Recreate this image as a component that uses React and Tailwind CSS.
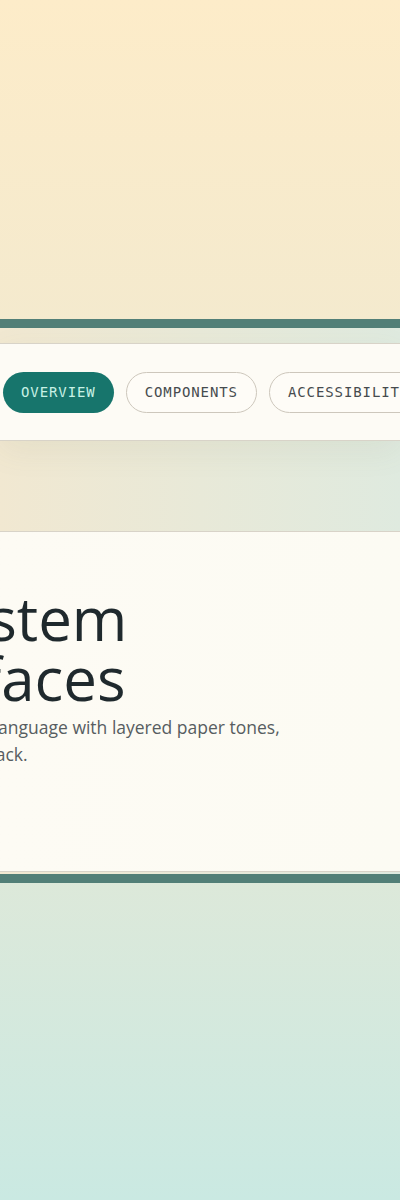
import React from 'react';

const tabs = ['Overview', 'Components', 'Accessibility', 'Tokens'];

const App = () => {
    const active = 'Overview';

    return (
        <div className="min-h-[1200px] overflow-hidden bg-gradient-to-b from-[#fdecc9] via-[#ece8d2] to-[#cae9e2] pt-[319px] font-['Open_Sans',sans-serif]">
            <section className="border-y-[9px] border-[#527f77] bg-gradient-to-r from-[#f1e8d1] to-[#dfeadf] pt-[15px] pb-[2px]">

                {/* Tabs */}
                <nav className="border-y border-[#d8d3c8] bg-[#fdfbf5] pt-[28px] pb-[27px] shadow-[0_10px_30px_rgba(120,110,80,0.08)]">
                    <div className="ml-[3px] flex gap-3 whitespace-nowrap">
                        {tabs.map((tab) => (
                            <button
                                key={tab}
                                className={`h-[41px] shrink-0 rounded-full px-[18px] font-['DejaVu_Sans_Mono',monospace] text-[14px] uppercase tracking-[0.9px] ${active === tab
                                    ? 'bg-[#17756c] text-[#c8f1e5]'
                                    : 'border border-[#cdc7bc] bg-[#fefcf7] text-[#464b4e]'
                                    }`}
                            >
                                {tab}
                            </button>
                        ))}
                    </div>
                </nav>

                {/* Hero card */}
                <article className="mt-[90px] h-[341px] border-y border-[#d8d3c8] bg-gradient-to-r from-[#fdfbf4] to-[#fcfbf3] pt-[56px]">
                    <div className="whitespace-nowrap">
                        <h1 className="ml-[-427px] text-[60px] font-normal leading-[60px] text-[#1f292d]">
                            Calm design system<br />for softer interfaces
                        </h1>
                        <p className="ml-[-250px] mt-[6px] text-[17.5px] leading-[27px] text-[#575d61]">
                            A calm, tactile and light visual language with layered paper tones,<br />soft shadows, and quiet feedback.
                        </p>
                    </div>
                </article>

            </section>
        </div>
    );
};

export default App;
